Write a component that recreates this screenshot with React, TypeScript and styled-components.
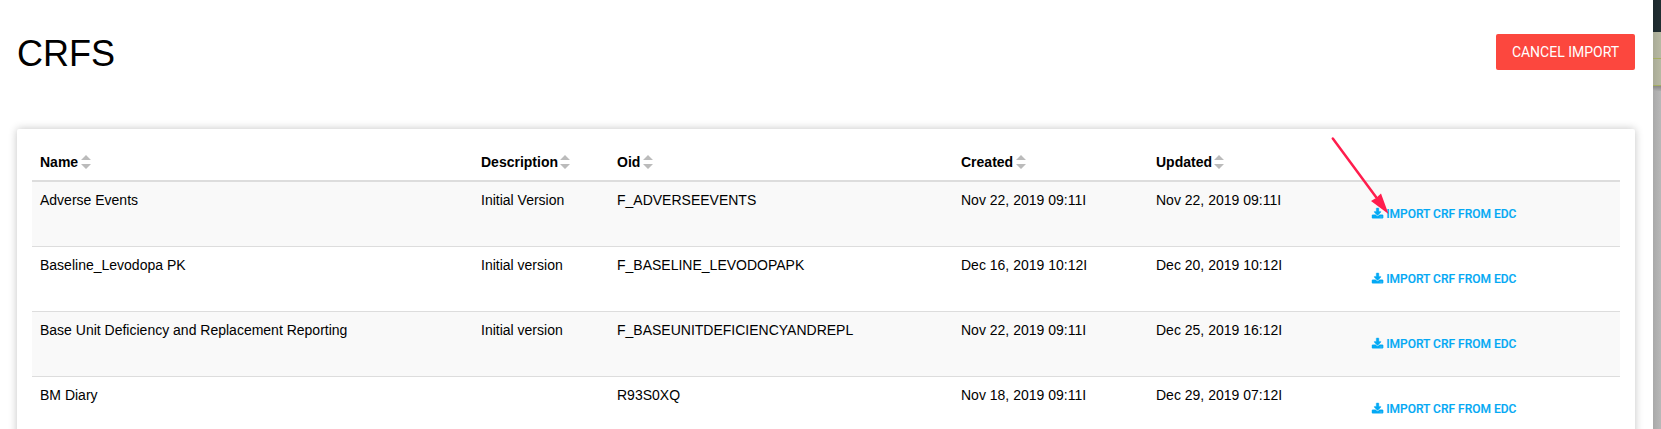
import React from "react";
import styled, { createGlobalStyle } from "styled-components";

const GlobalStyle = createGlobalStyle`
  * { box-sizing: border-box; }
  body { margin: 0; background: #fff; color: #000; font: 14px/20px "Liberation Sans", Arial, sans-serif; }
`;

const Screen = styled.div`
  display: flex;
  height: 429px;
  overflow: hidden;
`;

const Dialog = styled.main`
  width: 1653px;
  padding: 34px 18px 0 17px;
  background: #fff;
`;

const Backdrop = styled.aside`
  flex: 1;
  display: flex;
  flex-direction: column;
  background: linear-gradient(90deg, #a9a9a9, #b8b8b8);
`;

const BackdropBar = styled.div`
  height: 32px;
  background: linear-gradient(90deg, #1b282c, #212e32);
`;

const BackdropTab = styled.div<{ $height: number }>`
  height: ${(p) => p.$height}px;
  background: linear-gradient(90deg, #a9ab97, #b7b9a3);
  border-bottom: 1px solid #a5ae62;
`;

const BackdropShade = styled.div`
  height: 5px;
  background: linear-gradient(#888, #adadad);
`;

const Header = styled.header`
  display: flex;
  justify-content: space-between;
  align-items: flex-start;
  height: 95px;
`;

const Title = styled.h1`
  margin: 0;
  font-size: 36px;
  font-weight: 400;
  line-height: 40px;
`;

const CancelButton = styled.button`
  width: 139px;
  height: 36px;
  padding: 0;
  border: 0;
  border-radius: 2px;
  background: #fc473e;
  color: #fff;
  font: 400 14px/36px Roboto, sans-serif;
  text-transform: uppercase;
`;

const Card = styled.section`
  height: 400px;
  padding: 15px 15px 0;
  border-radius: 2px;
  background: #fff;
  box-shadow: 0 0 8px rgba(0, 0, 0, 0.24);
`;

const Table = styled.table`
  width: 1588px;
  table-layout: fixed;
  border-spacing: 0;
`;

const HeadCell = styled.th`
  height: 38px;
  padding: 8px 8px 8px;
  border-bottom: 2px solid #ddd;
  text-align: left;
  vertical-align: top;
  font-weight: 700;
  white-space: nowrap;
`;

const HeadLabel = styled.span<{ $gap: number }>`
  display: inline-flex;
  align-items: center;
  gap: ${(p) => p.$gap}px;
`;

const Row = styled.tr`
  &:nth-child(odd) { background: #f9f9f9; }
  & + & > td { height: 65px; border-top: 1px solid #ddd; }
`;

const Cell = styled.td`
  height: 64px;
  padding: 8px;
  vertical-align: top;
  white-space: nowrap;
`;

const ImportLink = styled.a`
  display: flex;
  align-items: center;
  gap: 3px;
  height: 20px;
  margin-top: 14px;
  color: #03a9f4;
  font: 500 12px/20px Roboto, sans-serif;
  text-transform: uppercase;
  -webkit-text-stroke: 0.15px #03a9f4;
`;

const DownloadGlyph = styled.svg`
  width: 11.14px;
  height: 12px;
  flex: none;
  overflow: visible;
`;

const Pointer = styled.svg`
  position: absolute;
  left: 1325px;
  top: 130px;
  pointer-events: none;
`;

const SortIcon = () => (
  <svg width="10" height="14" viewBox="0 0 10 14" fill="#bbb">
    <path d="M5 0L10 5H0zM5 14L10 9H0z" />
  </svg>
);

const DownloadIcon = () => (
  <DownloadGlyph viewBox="64 0 1664 1792" fill="currentColor" stroke="currentColor" strokeWidth="60">
    <path d="M1344 1344q0-26-19-45t-45-19-45 19-19 45 19 45 45 19 45-19 19-45zm256 0q0-26-19-45t-45-19-45 19-19 45 19 45 45 19 45-19 19-45zm128-224v320q0 40-28 68t-68 28h-1472q-40 0-68-28t-28-68v-320q0-40 28-68t68-28h465l135 136q58 56 136 56t136-56l136-136h464q40 0 68 28t28 68zm-325-569q17 41-14 70l-448 448q-18 19-45 19t-45-19l-448-448q-31-29-14-70 17-39 59-39h256v-448q0-26 19-45t45-19h256q26 0 45 19t19 45v448h256q42 0 59 39z" />
  </DownloadGlyph>
);

const headings = [
  { label: "Name", gap: 2.6 },
  { label: "Description", gap: 1.8 },
  { label: "Oid", gap: 2.6 },
  { label: "Created", gap: 2.6 },
  { label: "Updated", gap: 1.8 },
];
const columnWidths = [441, 136, 344, 195, 216, 256];

const forms = [
  ["Adverse Events", "Initial Version", "F_ADVERSEEVENTS", "Nov 22, 2019 09:11I", "Nov 22, 2019 09:11I"],
  ["Baseline_Levodopa PK", "Initial version", "F_BASELINE_LEVODOPAPK", "Dec 16, 2019 10:12I", "Dec 20, 2019 10:12I"],
  ["Base Unit Deficiency and Replacement Reporting", "Initial version", "F_BASEUNITDEFICIENCYANDREPL", "Nov 22, 2019 09:11I", "Dec 25, 2019 16:12I"],
  ["BM Diary", "", "R93S0XQ", "Nov 18, 2019 09:11I", "Dec 29, 2019 07:12I"],
];

export default function App() {
  return (
    <>
      <GlobalStyle />
      <Screen>
        <Dialog>
          <Header>
            <Title>CRFS</Title>
            <CancelButton>Cancel import</CancelButton>
          </Header>
          <Card>
            <Table>
              <colgroup>
                {columnWidths.map((width, i) => (
                  <col key={i} width={width} />
                ))}
              </colgroup>
              <thead>
                <tr>
                  {headings.map(({ label, gap }) => (
                    <HeadCell key={label}>
                      <HeadLabel $gap={gap}>
                        {label}
                        <SortIcon />
                      </HeadLabel>
                    </HeadCell>
                  ))}
                  <HeadCell />
                </tr>
              </thead>
              <tbody>
                {forms.map((form) => (
                  <Row key={form[0]}>
                    {form.map((value, i) => (
                      <Cell key={i}>{value}</Cell>
                    ))}
                    <Cell>
                      <ImportLink>
                        <DownloadIcon />
                        Import CRF from EDC
                      </ImportLink>
                    </Cell>
                  </Row>
                ))}
              </tbody>
            </Table>
          </Card>
        </Dialog>
        <Backdrop>
          <BackdropBar />
          <BackdropTab $height={27} />
          <BackdropTab $height={27} />
          <BackdropShade />
        </Backdrop>
      </Screen>
      <Pointer width="70" height="90" viewBox="1325 130 70 90">
        <path d="M1332.8 138.5L1376 197" stroke="#ff1d4d" strokeWidth="2.5" strokeLinecap="round" />
        <path d="M1388.5 214L1371 201L1376 198L1381 193.500Z" fill="#ff1d4d" />
      </Pointer>
    </>
  );
}
